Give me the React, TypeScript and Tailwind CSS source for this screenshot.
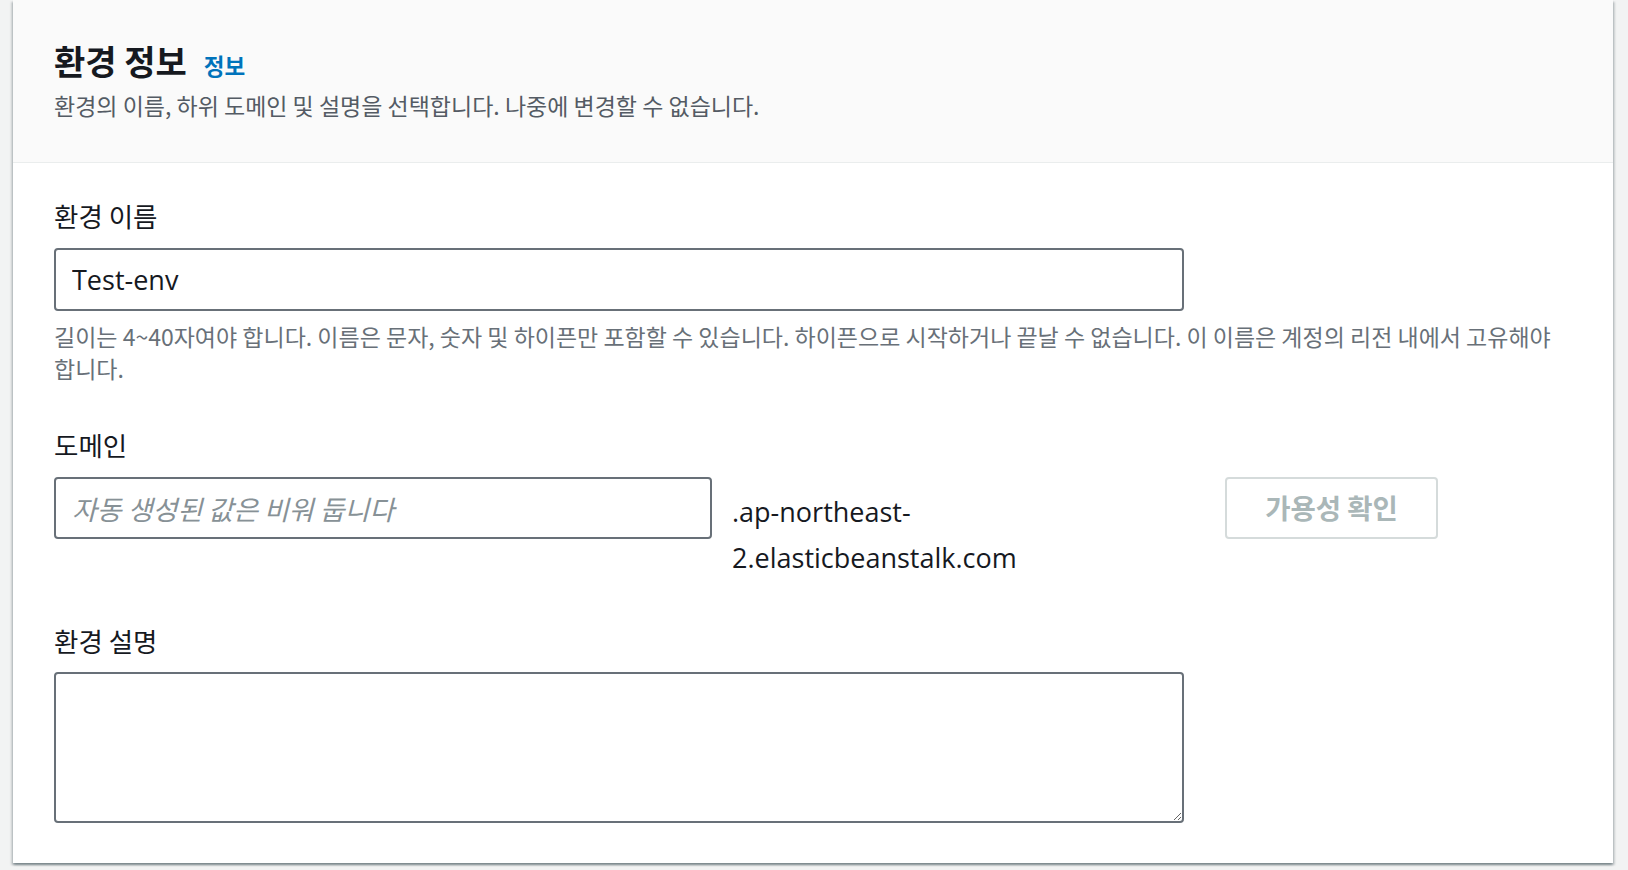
import React from "react";

const KR = { fontFamily: '"Noto Sans CJK KR", "Noto Sans", sans-serif' };
const LAT = { fontFamily: '"Open Sans", "Noto Sans CJK KR", sans-serif' };

export default function App() {
  return (
    <div className="min-h-screen w-full bg-[#f2f3f3] pl-[13px]" style={KR}>
      <div className="w-[1600px] bg-white shadow-[0_2px_2px_0_rgba(0,28,36,0.3),2px_2px_2px_0_rgba(0,28,36,0.15),-2px_2px_2px_0_rgba(0,28,36,0.15)]">
        {/* Header */}
        <div className="bg-[#fafafa] border-b border-[#eaeded] px-[41px] pt-[39px] pb-[41px]">
          <div className="flex items-baseline h-[44px]">
            <h2 className="text-[34px] leading-[44px] font-bold text-[#16191f]">환경 정보</h2>
            <a className="ml-[17px] text-[22.5px] leading-[44px] font-bold text-[#0073bb]">정보</a>
          </div>
          <p className="mt-[6px] text-[23px] leading-[32px] text-[#545b64]">
            환경의 이름, 하위 도메인 및 설명을 선택합니다. 나중에 변경할 수 없습니다.
          </p>
        </div>

        {/* Body */}
        <div className="px-[41px] pt-[31px] pb-[40px]">
          {/* 환경 이름 */}
          <label className="block text-[26.5px] leading-[44px] text-[#16191f]">환경 이름</label>
          <input
            defaultValue="Test-env"
            className="mt-[10px] block w-[1130px] h-[63px] rounded-[4px] border-2 border-[#687078] bg-white px-[16px] text-[27px] text-[#16191f] outline-none"
            style={LAT}
          />
          <p className="mt-[9px] w-[1519px] text-[23px] leading-[32px] text-[#687078] break-keep">
            길이는 4~40자여야 합니다. 이름은 문자, 숫자 및 하이픈만 포함할 수 있습니다. 하이픈으로 시작하거나 끝날 수 없습니다. 이 이름은 계정의 리전 내에서 고유해야 합니다.
          </p>

          {/* 도메인 */}
          <label className="mt-[39px] block text-[26.5px] leading-[44px] text-[#16191f]">도메인</label>
          <div className="mt-[10px] flex items-start">
            <input
              placeholder="자동 생성된 값은 비워 둡니다"
              className="block w-[658px] h-[62px] rounded-[4px] border-2 border-[#687078] bg-white px-[16px] text-[27px] text-[#16191f] outline-none placeholder:italic placeholder:text-[27px] placeholder:text-[#879196]"
              style={KR}
            />
            <div className="ml-[20px] mt-[12px] w-[360px] text-[27px] leading-[46px] text-[#16191f]" style={LAT}>
              .ap-northeast-2.elasticbeanstalk.com
            </div>
            <button
              className="ml-[133px] w-[213px] h-[62px] rounded-[4px] border-2 border-[#d5dbdb] bg-white text-[27.5px] font-bold text-[#aab7b8]"
              style={KR}
            >
              가용성 확인
            </button>
          </div>

          {/* 환경 설명 */}
          <label className="mt-[38px] block text-[26.5px] leading-[44px] text-[#16191f]">환경 설명</label>
          <textarea
            className="mt-[9px] block w-[1130px] h-[151px] rounded-[4px] border-2 border-[#687078] bg-white px-[16px] py-[8px] text-[27px] text-[#16191f] outline-none"
            style={LAT}
          />
        </div>
      </div>
    </div>
  );
}
